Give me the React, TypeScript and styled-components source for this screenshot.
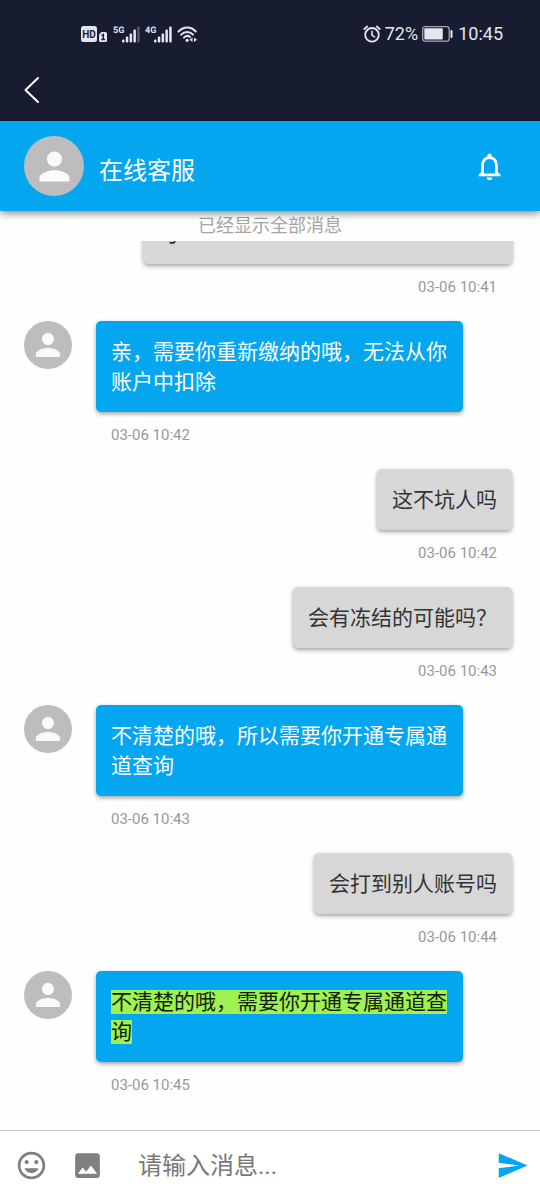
import React from "react";
import styled, { createGlobalStyle } from "styled-components";

const GlobalStyle = createGlobalStyle`
  * { box-sizing: border-box; }
  body {
    margin: 0;
    background: #fefefe;
    font-family: Roboto, "Noto Sans CJK SC", sans-serif;
  }
`;

const Screen = styled.main`
  display: flex;
  flex-direction: column;
  height: 100vh;
  overflow: hidden;
`;

const TopArea = styled.div`
  flex: none;
  background: #181c30;
  color: #e4e6ee;
`;

const StatusBar = styled.div`
  display: flex;
  align-items: center;
  justify-content: space-between;
  height: 68px;
  padding: 0 37px 0 80px;
`;

const StatusGroup = styled.div<{ $gap: number }>`
  display: flex;
  align-items: center;
  gap: ${(p) => p.$gap}px;
  font-size: 18px;
  line-height: 24px;

  svg {
    display: block;
  }
`;

const NavBar = styled.nav`
  display: flex;
  align-items: center;
  height: 53px;
  padding: 0 16px 12px;
`;

const IconButton = styled.button<{ $color: string }>`
  display: flex;
  align-items: center;
  justify-content: center;
  flex: none;
  padding: 0;
  border: 0;
  background: none;
  color: ${(p) => p.$color};
  cursor: pointer;
`;

const Header = styled.header`
  position: relative;
  z-index: 2;
  display: flex;
  align-items: center;
  flex: none;
  gap: 15px;
  height: 90px;
  padding: 0 34px 0 24px;
  background: #04a6f0;
  box-shadow: 0 2px 8px rgba(0, 0, 0, 0.5);
`;

const Title = styled.h1`
  flex: 1;
  margin: 0;
  padding-top: 10px;
  color: #fff;
  font-size: 24px;
  font-weight: 400;
  line-height: 30px;
`;

const AvatarCircle = styled.div<{ $size: number }>`
  display: flex;
  align-items: center;
  justify-content: center;
  flex: none;
  width: ${(p) => p.$size}px;
  height: ${(p) => p.$size}px;
  border-radius: 50%;
  background: #bdbdbd;
  color: #fafafa;
`;

const Notice = styled.p`
  flex: none;
  margin: 0;
  height: 30px;
  color: #a6a6a6;
  font-size: 18px;
  line-height: 30px;
  text-align: center;
`;

const MessageList = styled.section`
  display: flex;
  flex: 1;
  flex-direction: column;
  justify-content: flex-end;
  min-height: 0;
  overflow: hidden;
  padding-bottom: 11px;
`;

const MessageRow = styled.article<{ $own: boolean }>`
  display: flex;
  align-items: flex-start;
  justify-content: ${(p) => (p.$own ? "flex-end" : "flex-start")};
  flex: none;
  gap: 24px;
  padding: ${(p) => (p.$own ? "0 28px 0 143px" : "0 77px 0 24px")};
`;

const MessageBody = styled.div<{ $own: boolean; $full: boolean }>`
  display: flex;
  flex-direction: column;
  align-items: ${(p) => (p.$full ? "stretch" : p.$own ? "flex-end" : "flex-start")};
  flex: ${(p) => (p.$full ? "1" : "0 1 auto")};
  min-width: 0;
`;

const Bubble = styled.p<{ $own: boolean }>`
  margin: 0;
  padding: 16px 15px 15px;
  border-radius: 5px;
  background: ${(p) => (p.$own ? "#d7d7d7" : "#04a6f0")};
  color: ${(p) => (p.$own ? "#333" : "#fff")};
  font-size: 21px;
  line-height: 30px;
  box-shadow: 0 2px 4px rgba(0, 0, 0, 0.36);
`;

const Highlight = styled.mark`
  background: #9ff252;
  color: #10200c;
`;

const Time = styled.time<{ $own: boolean }>`
  margin: 13px 15px 24px;
  color: #999;
  font-size: 15px;
  line-height: 20px;
  text-align: ${(p) => (p.$own ? "right" : "left")};
`;

const Composer = styled.form`
  display: flex;
  align-items: center;
  flex: none;
  height: 70px;
  padding: 0 11px 0 15px;
  border-top: 1px solid #c6c6c6;
  background: #fff;
`;

const Tools = styled.div`
  display: flex;
  gap: 23px;
  margin-right: 34px;
`;

const MessageInput = styled.input`
  flex: 1;
  min-width: 0;
  height: 40px;
  padding: 0;
  border: 0;
  outline: 0;
  background: none;
  color: #333;
  font: 400 24px Roboto, "Noto Sans CJK SC", sans-serif;

  &::placeholder {
    color: #777;
    opacity: 1;
  }
`;

const ICONS = {
  person:
    "M12 12c2.21 0 4-1.79 4-4s-1.79-4-4-4-4 1.79-4 4 1.79 4 4 4zm0 2c-2.67 0-8 1.34-8 4v2h16v-2c0-2.66-5.33-4-8-4z",
  bell: "M12 22c1.1 0 2-.9 2-2h-4c0 1.1.89 2 2 2zm6-6v-5c0-3.07-1.64-5.64-4.5-6.32V4c0-.83-.67-1.5-1.5-1.5s-1.5.67-1.5 1.5v.68C7.63 5.36 6 7.92 6 11v5l-2 2v1h16v-1l-2-2zm-2 1H8v-6c0-2.48 1.51-4.5 4-4.5s4 2.02 4 4.5v6z",
  smile:
    "M11.99 2C6.47 2 2 6.48 2 12s4.47 10 9.99 10C17.52 22 22 17.52 22 12S17.52 2 11.99 2zM12 20c-4.42 0-8-3.58-8-8s3.58-8 8-8 8 3.58 8 8-3.58 8-8 8zm3.5-9c.83 0 1.5-.67 1.5-1.5S16.33 8 15.5 8 14 8.67 14 9.5s.67 1.5 1.5 1.5zm-7 0c.83 0 1.5-.67 1.5-1.5S9.33 8 8.5 8 7 8.67 7 9.5 7.67 11 8.5 11zm3.5 6.5c2.33 0 4.31-1.46 5.11-3.5H6.89c.8 2.04 2.78 3.5 5.11 3.5z",
  photo:
    "M21 19V5c0-1.1-.9-2-2-2H5c-1.1 0-2 .9-2 2v14c0 1.1.9 2 2 2h14c1.1 0 2-.9 2-2zM8.5 13.5l2.5 3.01L14.5 12l4.5 6H5l3.5-4.5z",
  send: "M2.01 21L23 12 2.01 3 2 10l15 2-15 2z",
};

function Icon({ name, size }: { name: keyof typeof ICONS; size: number }) {
  return (
    <svg width={size} height={size} viewBox="0 0 24 24" fill="currentColor" aria-hidden="true">
      <path d={ICONS[name]} />
    </svg>
  );
}

function Avatar({ size }: { size: number }) {
  return (
    <AvatarCircle $size={size}>
      <Icon name="person" size={size * 0.75} />
    </AvatarCircle>
  );
}

function HdBadge() {
  return (
    <svg width="28" height="18" viewBox="0 0 28 18">
      <rect x="1" y="1" width="16" height="16" rx="2.5" fill="#e4e6ee" />
      <text x="9" y="12.8" textAnchor="middle" fontSize="10" fontWeight="700" fill="#181c30">
        HD
      </text>
      <path d="M19 9.5 21.5 7H25.500a1.500 1.500 0 0 1 1.500 1.500V15.500A1.500 1.500 0 0 1 25.500 17H20.500A1.500 1.500 0 0 1 19 15.500z" fill="#e4e6ee" />
      <path d="M21.5 10.500 23.300 9.500V14.500M21.300 14.500H25" fill="none" stroke="#181c30" strokeWidth="1.400" />
    </svg>
  );
}

function Signal({ label, level }: { label: string; level: number }) {
  const heights = [3, 6, 9, 13, 16];
  return (
    <svg width="27" height="18" viewBox="0 0 27 18">
      <text x="0" y="8" fontSize="9" fontWeight="700" fill="#e4e6ee" textRendering="geometricPrecision">
        {label}
      </text>
      {heights.map((h, i) => (
        <rect
          key={h}
          x={9 + i * 3.8}
          y={17.5 - h}
          width="2.5"
          height={h}
          rx="1"
          fill="#e4e6ee"
          opacity={i < level ? 1 : 0.3}
        />
      ))}
    </svg>
  );
}

function Wifi() {
  return (
    <svg width="21" height="18" viewBox="0 0 21 18" fill="none" stroke="#e4e6ee" strokeWidth="2" strokeLinecap="round">
      <path d="M1.500 6.500C6.500 1 14 1 18.800 6.500" />
      <path d="M4.200 9.600C7.500 6 12.800 6 16 9.600" />
      <path d="M7 12.600C9 10.600 11.500 10.600 13 12" />
      <circle cx="10.200" cy="15.300" r="1.600" fill="#e4e6ee" stroke="none" />
      <path d="M15.500 12.500v4.500l-3-2.200zM17 12.500v4.500l3-2.200z" fill="#e4e6ee" stroke="none" />
    </svg>
  );
}

function Alarm() {
  return (
    <svg width="18" height="18" viewBox="0 0 18 18" fill="none" stroke="#e4e6ee" strokeWidth="1.800" strokeLinecap="round">
      <circle cx="9" cy="9.800" r="6.800" />
      <path d="M9 6.200V10l2.500 2" strokeWidth="1.600" />
      <path d="M1.200 4.200 4.200 1.500M16.800 4.200 13.800 1.500" />
    </svg>
  );
}

function Battery() {
  return (
    <svg width="32" height="16" viewBox="0 0 32 16">
      <rect x="0.700" y="0.700" width="26.500" height="14.500" rx="2.500" fill="none" stroke="#a4a7b3" strokeWidth="1.300" />
      <rect x="2.300" y="2.300" width="18.500" height="11.300" rx="1" fill="#e4e6ee" />
      <rect x="28.500" y="4" width="2" height="8" rx="1" fill="#e4e6ee" />
    </svg>
  );
}

type Message = {
  text: string;
  time: string;
  own?: boolean;
  full?: boolean;
  highlighted?: boolean;
};

const MESSAGES: Message[] = [
  { text: "可", time: "03-06 10:41", own: true, full: true },
  { text: "亲，需要你重新缴纳的哦，无法从你账户中扣除", time: "03-06 10:42" },
  { text: "这不坑人吗", time: "03-06 10:42", own: true },
  { text: "会有冻结的可能吗？", time: "03-06 10:43", own: true },
  { text: "不清楚的哦，所以需要你开通专属通道查询", time: "03-06 10:43" },
  { text: "会打到别人账号吗", time: "03-06 10:44", own: true },
  { text: "不清楚的哦，需要你开通专属通道查询", time: "03-06 10:45", highlighted: true },
];

function ChatMessage({ text, time, own = false, full = false, highlighted = false }: Message) {
  return (
    <MessageRow $own={own}>
      {!own && <Avatar size={48} />}
      <MessageBody $own={own} $full={full}>
        <Bubble $own={own}>{highlighted ? <Highlight>{text}</Highlight> : text}</Bubble>
        <Time $own={own}>{time}</Time>
      </MessageBody>
    </MessageRow>
  );
}

export default function App() {
  return (
    <Screen lang="zh-CN">
      <GlobalStyle />
      <TopArea>
        <StatusBar>
          <StatusGroup $gap={5}>
            <HdBadge />
            <Signal label="5G" level={4} />
            <Signal label="4G" level={5} />
            <Wifi />
          </StatusGroup>
          <StatusGroup $gap={4}>
            <Alarm />
            <span>72%</span>
            <Battery />
            <span>10:45</span>
          </StatusGroup>
        </StatusBar>
        <NavBar>
          <IconButton type="button" aria-label="返回" $color="#fff">
            <svg width="32" height="32" viewBox="0 0 32 32" fill="none" stroke="currentColor" strokeWidth="2" strokeLinecap="round" strokeLinejoin="round">
              <path d="M22 5 9.5 17 22 29" />
            </svg>
          </IconButton>
        </NavBar>
      </TopArea>
      <Header>
        <Avatar size={60} />
        <Title>在线客服</Title>
        <IconButton type="button" aria-label="通知" $color="#fff">
          <Icon name="bell" size={33} />
        </IconButton>
      </Header>
      <Notice>已经显示全部消息</Notice>
      <MessageList>
        {MESSAGES.map((message, index) => (
          <ChatMessage key={index} {...message} />
        ))}
      </MessageList>
      <Composer onSubmit={(event) => event.preventDefault()}>
        <Tools>
          <IconButton type="button" aria-label="表情" $color="#808080">
            <Icon name="smile" size={33} />
          </IconButton>
          <IconButton type="button" aria-label="图片" $color="#808080">
            <Icon name="photo" size={33} />
          </IconButton>
        </Tools>
        <MessageInput type="text" aria-label="消息" placeholder="请输入消息..." />
        <IconButton type="submit" aria-label="发送" $color="#04a6f0">
          <Icon name="send" size={33} />
        </IconButton>
      </Composer>
    </Screen>
  );
}
